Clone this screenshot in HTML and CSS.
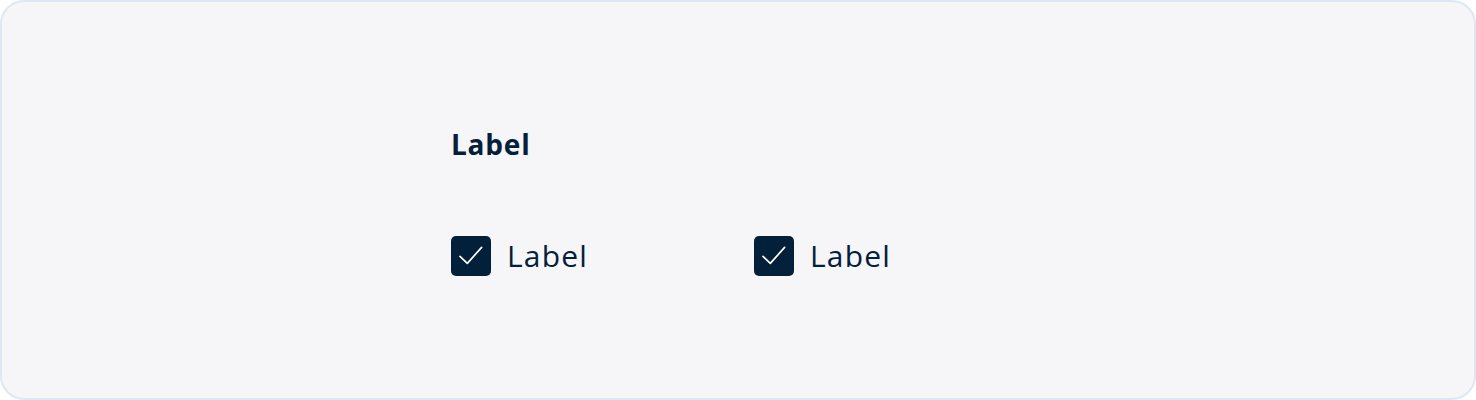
FILE: index.html
```html
<!DOCTYPE html>
<html>
<head>
<meta charset="utf-8">
<link rel="stylesheet" href="styles.css">
</head>
<body>
<div class="card">
  <div class="group">
    <div class="group-label">Label</div>
    <div class="options">
      <label class="option">
        <span class="box"><svg viewBox="0 0 40 40" width="40" height="40"><path d="M9 20.3 L16.3 27.4 L30.6 11.4" fill="none" stroke="#fff" stroke-width="1.7" stroke-linecap="round" stroke-linejoin="round"/></svg></span>
        <span class="text">Label</span>
      </label>
      <label class="option">
        <span class="box"><svg viewBox="0 0 40 40" width="40" height="40"><path d="M9 20.3 L16.3 27.4 L30.6 11.4" fill="none" stroke="#fff" stroke-width="1.7" stroke-linecap="round" stroke-linejoin="round"/></svg></span>
        <span class="text">Label</span>
      </label>
    </div>
  </div>
</div>
</body>
</html>
```
FILE: styles.css
```css
html, body {
  margin: 0;
  padding: 0;
  background: #ffffff;
}
.card {
  box-sizing: border-box;
  width: 1476px;
  height: 400px;
  border: 2px solid #dee7f3;
  border-radius: 24px;
  background: #f6f6f9;
  display: flex;
  align-items: flex-start;
  padding: 126px 0 0 449px;
  font-family: "Open Sans", "Noto Sans", sans-serif;
  color: #03203b;
}
.group {
  display: flex;
  flex-direction: column;
  gap: 76px;
}
.group-label {
  font-weight: 700;
  font-size: 28px;
  line-height: 32px;
  letter-spacing: 0.8px;
}
.options {
  display: flex;
}
.option {
  width: 303px;
  display: flex;
  align-items: center;
  gap: 16px;
}
.box {
  width: 40px;
  height: 40px;
  border-radius: 5px;
  background: #03203b;
  display: block;
}
.box svg {
  display: block;
}
.text {
  font-size: 30px;
  line-height: 40px;
  letter-spacing: 1.2px;
}
```
